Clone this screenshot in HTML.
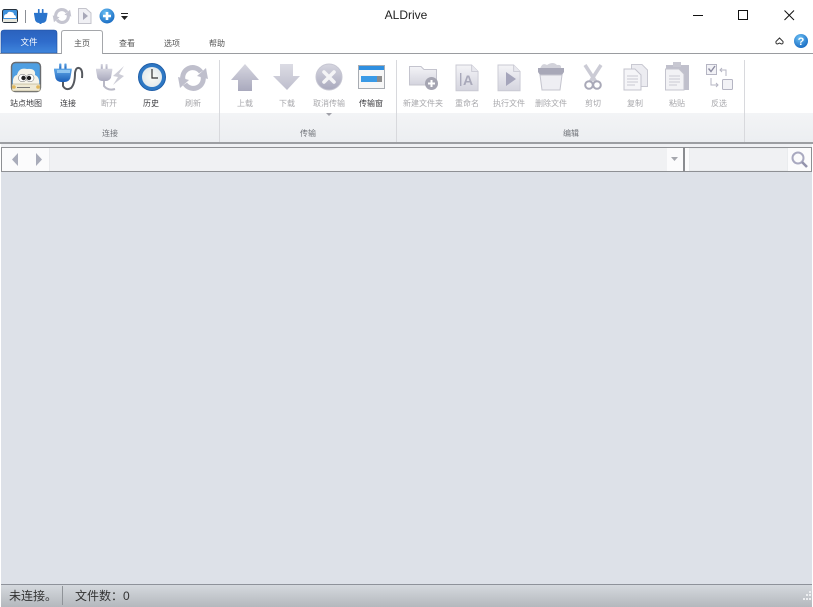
<!DOCTYPE html>
<html><head><meta charset="utf-8"><style>
html,body{margin:0;padding:0;background:#fff;width:813px;height:607px;overflow:hidden}
svg{display:block;position:absolute;left:0;top:0}
text{font-family:"Liberation Sans","Noto Sans CJK SC",sans-serif}
.l{font-size:8px;text-anchor:middle;fill:#a8a8ac}
.d{fill:#3a3a3e}
.g{font-size:8px;text-anchor:middle;fill:#6f7278}
.t{font-size:8px;text-anchor:middle;fill:#555}
</style></head><body>
<svg width="813" height="607" viewBox="0 0 813 607" xmlns="http://www.w3.org/2000/svg">
<defs>
<linearGradient id="file" x1="0" y1="0" x2="0" y2="1"><stop offset="0" stop-color="#2b62bd"/><stop offset=".5" stop-color="#2f6ccb"/><stop offset="1" stop-color="#3f86dc"/></linearGradient>
<linearGradient id="ribbon" x1="0" y1="0" x2="0" y2="1"><stop offset="0" stop-color="#f3f4f6"/><stop offset="1" stop-color="#eceef1"/></linearGradient>
<linearGradient id="gr" x1="0" y1="0" x2="0" y2="1"><stop offset="0" stop-color="#d6d6e0"/><stop offset="1" stop-color="#a9a9bd"/></linearGradient>
<linearGradient id="gm" x1="0" y1="0" x2="0" y2="1"><stop offset="0" stop-color="#dcdce4"/><stop offset="1" stop-color="#bebecd"/></linearGradient>
<linearGradient id="gl" x1="0" y1="0" x2="0" y2="1"><stop offset="0" stop-color="#f4f4f7"/><stop offset="1" stop-color="#d4d4de"/></linearGradient>
<linearGradient id="bl" x1="0" y1="0" x2="0" y2="1"><stop offset="0" stop-color="#5fa8e8"/><stop offset="1" stop-color="#1c5fb8"/></linearGradient>
<linearGradient id="st" x1="0" y1="0" x2="0" y2="1"><stop offset="0" stop-color="#d5d9de"/><stop offset="1" stop-color="#b4b8bd"/></linearGradient>
<radialGradient id="ball" cx=".4" cy=".3" r=".8"><stop offset="0" stop-color="#6cc0f4"/><stop offset="1" stop-color="#0f62bd"/></radialGradient>
<radialGradient id="face" cx=".5" cy=".5" r=".6"><stop offset="0" stop-color="#fafbf6"/><stop offset="1" stop-color="#dfe6ea"/></radialGradient>
<g id="plug">
<rect x="7" y="0" width="3" height="8" rx="1"/><rect x="14" y="0" width="3" height="8" rx="1"/>
<path d="M0 7H24V9L22 20Q20 25 14 25H10Q4 25 2 20L0 9Z"/>
</g>
<g id="refresh">
<path d="M-10 2A10 10 0 0 1 8 -6" fill="none" stroke-width="5"/>
<path d="M10 -2A10 10 0 0 1 -8 6" fill="none" stroke-width="5"/>
<path d="M13 -10L15 1L4 -2Z" stroke="none"/>
<path d="M-13 10L-15 -1L-4 2Z" stroke="none"/>
</g>
<g id="pageicon">
<path d="M0 0H17L24 7V28H0Z" fill="url(#gl)" stroke="#c9c9d3"/>
<path d="M17 0V7H24" fill="#e8e8ee" stroke="#c9c9d3"/>
</g>
</defs>

<!-- backgrounds -->
<rect width="813" height="607" fill="#fff"/>
<rect x="0" y="53" width="813" height="1" fill="#9a9ca0"/>
<rect x="0" y="113" width="813" height="29" fill="url(#ribbon)"/>
<rect x="0" y="142" width="813" height="2" fill="#9c9ea2"/>
<rect x="0" y="144" width="813" height="3" fill="#eff0f3"/>
<rect x="1.500" y="147.500" width="810" height="24" fill="#fbfbfc" stroke="#8e9094"/>
<rect x="0" y="172" width="813" height="413" fill="#dde1e8"/>

<!-- group separators -->
<rect x="219" y="60" width="1" height="82" fill="#d8d9dd"/>
<rect x="396" y="60" width="1" height="82" fill="#d8d9dd"/>
<rect x="744" y="60" width="1" height="82" fill="#d8d9dd"/>

<!-- quick access -->
<rect x="2.5" y="9.5" width="15" height="13" rx="2" fill="#3f92dc" stroke="#26303c"/>
<path d="M4 17Q4 14 7 14Q8 11 11 12Q14 12 14 15Q16 15 16 18H4Z" fill="#fff"/>
<rect x="3" y="19" width="14" height="3" fill="#e6e6dc"/>
<rect x="25" y="10" width="1" height="13" fill="#8b8f95"/>
<g transform="translate(34,9) scale(.56)" fill="#2a74cc"><use href="#plug"/></g>
<rect x="39.500" y="21" width="2" height="3" fill="#2a74cc"/>
<g transform="translate(62,16) scale(.62)" fill="#c5c5d0" stroke="#c5c5d0"><use href="#refresh"/></g>
<path d="M78.5 8.5H86L91 13V23.5H78.5Z" fill="#f0f0f4" stroke="#c4c4cc"/>
<path d="M83 12L88 16L83 20Z" fill="#a8a8b8"/>
<circle cx="107" cy="16" r="7.5" fill="url(#ball)"/>
<path d="M103 14.7H105.7V12H108.3V14.7H111V17.3H108.3V20H105.7V17.3H103Z" fill="#fff"/>
<rect x="121" y="13" width="7" height="1" fill="#222"/>
<path d="M121 16H128L124.5 20Z" fill="#222"/>

<!-- title -->
<text x="406" y="19" font-size="12" text-anchor="middle" fill="#222">ALDrive</text>
<rect x="693" y="15" width="10" height="1" fill="#111"/>
<rect x="738.5" y="10.5" width="9" height="9" fill="none" stroke="#111"/>
<path d="M784.5 10.5L794 20M794 10.5L784.5 20" stroke="#111" fill="none"/>

<!-- tabs -->
<path d="M1 53V33Q1 30 4 30H54Q57 30 57 33V53Z" fill="url(#file)" stroke="#1f4f9e" stroke-width=".6"/>
<text x="29" y="45" font-size="8.5" text-anchor="middle" fill="#fff">文件</text>
<path d="M61.5 54V33Q61.5 30.5 64 30.5H100Q102.5 30.5 102.5 33V54" fill="#fff" stroke="#a5a7ab"/>
<rect x="62" y="53" width="40" height="1" fill="#fff"/>
<text x="82" y="46" class="t">主页</text>
<text x="127" y="46" class="t">查看</text>
<text x="172" y="46" class="t">选项</text>
<text x="217" y="46" class="t">帮助</text>
<path d="M776 41.500L779.500 38L783 41.500Q783.500 44 781.500 44L779.500 43L777.500 44Q775.500 44 776 41.500Z" fill="none" stroke="#333" stroke-width="1"/>
<circle cx="801" cy="41" r="7" fill="url(#ball)"/>
<text x="801" y="45" font-size="11" font-weight="bold" text-anchor="middle" fill="#fff">?</text>

<!-- site map icon -->
<rect x="11.5" y="62.5" width="29" height="29" rx="4" fill="#4f9fe2" stroke="#6a6c70" stroke-width="1.4"/>
<path d="M13 85Q12 76 17 75Q19 67 27 69Q36 68 35 75Q40 77 39 85Z" fill="#f6f4ea"/>
<ellipse cx="22.500" cy="78" rx="4" ry="3.8" fill="#fff" stroke="#666" stroke-width=".5"/>
<ellipse cx="30" cy="78" rx="4" ry="3.8" fill="#fff" stroke="#666" stroke-width=".5"/>
<circle cx="23.500" cy="78" r="2.2" fill="#222"/><circle cx="29" cy="78" r="2.2" fill="#222"/>
<rect x="12" y="84" width="28" height="7" rx="1" fill="#eee9d4" stroke="#a39a74" stroke-width=".6"/>
<rect x="17" y="87" width="13" height="1" fill="#777"/>
<circle cx="14" cy="87" r="1.8" fill="#e1b75a"/><circle cx="38" cy="87" r="1.8" fill="#e1b75a"/>

<!-- connect -->
<g transform="translate(54,63.500) scale(.74)" fill="url(#bl)"><use href="#plug"/></g>
<rect x="57" y="70" width="13" height="3" fill="#9fd0f4" opacity=".8"/>
<path d="M63 82V86Q66 91 71 88Q75 84 75 73Q76 67 79 68Q83 69 82 78" fill="none" stroke="#55585e" stroke-width="2"/>

<!-- disconnect -->
<g transform="translate(96,64) scale(.68)" fill="url(#gr)"><use href="#plug"/></g>
<path d="M104 81V86Q108 91 115 89" fill="none" stroke="#b9b9c6" stroke-width="2"/>
<path d="M124 66L113 76L118 77L113 85L124 76L119 74Z" fill="#cdcdd7"/>

<!-- history clock -->
<circle cx="152" cy="77" r="13.500" fill="#2e78c4" stroke="#1f5ea8"/>
<circle cx="152" cy="77" r="10" fill="url(#face)"/>
<path d="M152 69V78H158" fill="none" stroke="#333" stroke-width="1.200"/>

<!-- refresh -->
<g transform="translate(193,78)" fill="#bfbfcc" stroke="#bfbfcc"><use href="#refresh"/></g>

<!-- transfer -->
<path d="M245 64L259 80H252V91H238V80H231Z" fill="url(#gr)"/>
<path d="M280 64H293V76H300L287 90L273 76H280Z" fill="url(#gm)"/>
<circle cx="329" cy="77" r="13" fill="url(#gr)" stroke="#c6c6d2"/>
<path d="M324 72L334 82M334 72L324 82" stroke="#f4f4f6" stroke-width="3.6" stroke-linecap="round"/>
<rect x="358.5" y="65.5" width="26" height="23" fill="#f7f7f7" stroke="#a8acb2"/>
<rect x="359" y="66" width="25" height="4" fill="#2f8fe0"/>
<rect x="361" y="76" width="21" height="6" fill="#8c8c8c"/>
<rect x="361" y="76" width="16" height="6" fill="#3a9ae6"/>
<path d="M326 113H332L329 116Z" fill="#a0a0a8"/>

<!-- new folder -->
<path d="M409.5 85V66.5H421L424 69.5H436.5V85Z" fill="url(#gl)" stroke="#c4c4ce"/>
<circle cx="431.5" cy="83.5" r="6.5" fill="#a5a5b2"/>
<path d="M428 82.5H430.5V80H432.5V82.5H435V84.5H432.5V87H430.5V84.5H428Z" fill="#fff"/>

<!-- rename -->
<g transform="translate(456,65) scale(.92)"><use href="#pageicon"/></g>
<text x="468" y="85" font-size="14" font-family="Liberation Sans" font-weight="bold" text-anchor="middle" fill="#a9a9ba">A</text>
<rect x="460" y="73" width="1.4" height="13" fill="#a9a9ba"/>

<!-- run -->
<g transform="translate(498,65) scale(.92)"><use href="#pageicon"/></g>
<path d="M506 72L516 79L506 86Z" fill="#a5a5bb"/>

<!-- delete -->
<path d="M540 69Q542 62 547 65Q553 61 557 65Q562 64 561 69Z" fill="#d2d2da"/>
<path d="M538 68H564V72L562 75H540L538 72Z" fill="#a8a8b8"/>
<path d="M540 75H562L560 90H542Z" fill="#eeeef3" stroke="#c4c4ce"/>

<!-- scissors -->
<path d="M585 65L596 82M601 65L590 82" stroke="#cbcbd5" stroke-width="3.500" fill="none"/>
<circle cx="589" cy="85" r="3.800" stroke="#a9a9b8" stroke-width="2" fill="none"/>
<circle cx="597" cy="85" r="3.800" stroke="#a9a9b8" stroke-width="2" fill="none"/>

<!-- copy -->
<path d="M631.5 64.5H642L647.5 70V86.5H631.5Z" fill="#ececf1" stroke="#c9c9d2"/>
<path d="M624 69H635L641 75V90H624Z" fill="#f5f5f8" stroke="#c4c4ce"/>
<path d="M627 76H638M627 79H638M627 82H638M627 85H635" stroke="#c9c9d2"/>

<!-- paste -->
<rect x="666" y="65" width="23" height="25" fill="#c0c0cc"/>
<rect x="673" y="62" width="8" height="5" fill="#c8c8d2"/>
<path d="M665.5 69H679L684 74V90H665.5Z" fill="#f2f2f5" stroke="#c4c4ce"/>
<path d="M669 76H680M669 79H680M669 82H680M669 85H677" stroke="#c9c9d2"/>

<!-- invert -->
<rect x="706.5" y="64.5" width="10" height="10" fill="#f2f2f6" stroke="#b5b5c3"/>
<path d="M708.500 68.500L711 71.500L715 66" fill="none" stroke="#8d8da2" stroke-width="1.400"/>
<rect x="722.5" y="79.500" width="10" height="10" rx="1" fill="#f2f2f6" stroke="#b5b5c3"/>
<path d="M726 76V70H720M722 68L720 70L722 72M711 78V85H718M716 83L718 85L716 87" fill="none" stroke="#b5b5c3"/>

<!-- labels -->
<text x="26" y="106" class="l d">站点地图</text>
<text x="68" y="106" class="l d">连接</text>
<text x="109" y="106" class="l">断开</text>
<text x="151" y="106" class="l d">历史</text>
<text x="193" y="106" class="l">刷新</text>
<text x="245" y="106" class="l">上载</text>
<text x="287" y="106" class="l">下载</text>
<text x="329" y="106" class="l">取消传输</text>
<text x="371" y="106" class="l d">传输窗</text>
<text x="423" y="106" class="l">新建文件夹</text>
<text x="467" y="106" class="l">重命名</text>
<text x="509" y="106" class="l">执行文件</text>
<text x="551" y="106" class="l">删除文件</text>
<text x="593" y="106" class="l">剪切</text>
<text x="635" y="106" class="l">复制</text>
<text x="677" y="106" class="l">粘贴</text>
<text x="719" y="106" class="l">反选</text>
<text x="110" y="136" class="g">连接</text>
<text x="308" y="136" class="g">传输</text>
<text x="571" y="136" class="g">编辑</text>

<!-- address bar -->
<rect x="50" y="148" width="617" height="23" fill="#f0f1f3"/>
<rect x="49" y="148" width="1" height="23" fill="#e8e9ec"/>
<path d="M18 153V166L12 159.500Z" fill="#a9acba"/>
<path d="M36 153V166L42 159.500Z" fill="#a9acba"/>
<path d="M671 157H678L674.500 161Z" fill="#a6a8ae"/>
<rect x="683" y="147" width="2" height="25" fill="#8a8c90"/>
<rect x="689.300" y="148.300" width="98.400" height="22.400" fill="#f0f1f3" stroke="#e7e8ea" stroke-width=".6"/>
<circle cx="798" cy="158" r="5.500" fill="none" stroke="#a9a9c0" stroke-width="2"/>
<path d="M802 162L807 167" stroke="#9393ac" stroke-width="2.600"/>

<!-- status bar -->
<rect x="0" y="584" width="813" height="1" fill="#8e929a"/>
<rect x="0" y="585" width="813" height="22" fill="url(#st)"/>
<rect x="62" y="586" width="1" height="19" fill="#8f9398"/>
<text x="9" y="600" font-size="12" fill="#333">未连接。</text>
<text x="75" y="600" font-size="12" fill="#333">文件数：</text>
<text x="123" y="600" font-size="12" fill="#333">0</text>
<g fill="#eceef0"><rect x="809" y="591" width="2" height="2"/><rect x="806" y="594" width="2" height="2"/><rect x="809" y="594" width="2" height="2"/><rect x="803" y="598" width="2" height="2"/><rect x="806" y="598" width="2" height="2"/><rect x="809" y="598" width="2" height="2"/></g>

<!-- window edges -->
<rect x="0" y="144" width="1" height="463" fill="#fff"/>
<rect x="812" y="144" width="1" height="463" fill="#fff"/>
</svg>
</body></html>
